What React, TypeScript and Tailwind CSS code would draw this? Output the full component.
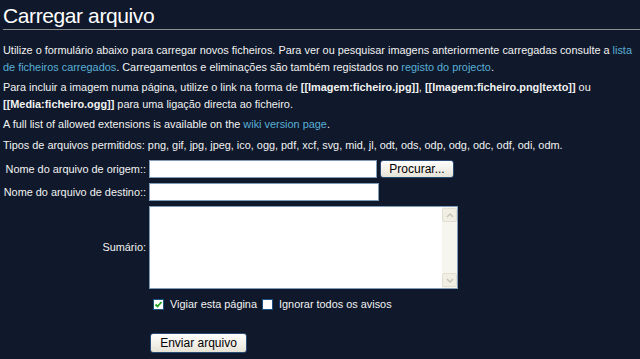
import React from "react";

const font = { fontFamily: '"Liberation Sans", Arial, sans-serif' };

function Link({ children }: { children: React.ReactNode }) {
  return <span className="text-[#5aaed6]">{children}</span>;
}

function CheckBox({ checked }: { checked?: boolean }) {
  return (
    <span className="inline-flex h-[11px] w-[11px] items-center justify-center border border-[#1c5180] bg-white">
      {checked && (
        <svg viewBox="0 0 9 9" className="h-[9px] w-[9px]">
          <path d="M1.5 4.5 L3.5 6.5 L7.5 2" stroke="#21a121" strokeWidth="1.8" fill="none" />
        </svg>
      )}
    </span>
  );
}

function XpButton({ children, className }: { children: React.ReactNode; className?: string }) {
  return (
    <button
      className={`rounded-[3px] border border-[#2b4a74] bg-gradient-to-b from-white to-[#e6e3d6] text-[12px] text-black ${className ?? ""}`}
    >
      {children}
    </button>
  );
}

export default function App() {
  return (
    <div className="h-[359px] w-[640px] overflow-hidden bg-[#0f192b] text-[10.9px] text-[#f2f2f2]" style={font}>
      <h1 className="ml-[3px] border-b border-[#8d8d8d] pt-[3px] pb-[1px] text-[21px] leading-[25px] tracking-[-0.4px] text-white">
        Carregar arquivo
      </h1>

      <div className="px-[3px] pt-[12px] leading-[16.5px]">
        <p className="whitespace-nowrap">
          Utilize o formulário abaixo para carregar novos ficheiros. Para ver ou pesquisar imagens anteriormente carregadas consulte a <Link>lista</Link>
          <br />
          <Link>de ficheiros carregados</Link>. Carregamentos e eliminações são também registados no <Link>registo do projecto</Link>.
        </p>
        <p className="mt-[4px] whitespace-nowrap">
          Para incluir a imagem numa página, utilize o link na forma de <b>[[Imagem:ficheiro.jpg]]</b>, <b>[[Imagem:ficheiro.png|texto]]</b> ou
          <br />
          <b>[[Media:ficheiro.ogg]]</b> para uma ligação directa ao ficheiro.
        </p>
        <p className="mt-[4px] whitespace-nowrap">
          A full list of allowed extensions is available on the <Link>wiki version page</Link>.
        </p>
        <p className="mt-[4px] whitespace-nowrap">
          Tipos de arquivos permitidos: png, gif, jpg, jpeg, ico, ogg, pdf, xcf, svg, mid, jl, odt, ods, odp, odg, odc, odf, odi, odm.
        </p>
      </div>

      <div className="mt-[7px] grid grid-cols-[146px_1fr] gap-x-[3px] gap-y-[5px]">
        <label className="self-center whitespace-nowrap text-right">Nome do arquivo de origem::</label>
        <div className="flex items-center gap-[3px]">
          <div className="h-[18px] w-[228px] border border-[#7f9db9] bg-white" />
          <XpButton className="h-[18px] w-[74px] leading-[14px]">Procurar...</XpButton>
        </div>

        <label className="self-center whitespace-nowrap text-right">Nome do arquivo de destino::</label>
        <div className="h-[18px] w-[230px] border border-[#7f9db9] bg-white" />

        <label className="self-center text-right">Sumário:</label>
        <div className="flex h-[83px] w-[309px] border border-[#7f9db9] bg-white">
          <div className="flex-1" />
          <div className="flex w-[15px] flex-col justify-between bg-[#f6f5ee] py-px">
            <div className="flex h-[14px] items-center justify-center rounded-[2px] border border-[#e1dfd2] bg-[#f1efe4]">
              <svg viewBox="0 0 8 5" className="h-[5px] w-[8px]">
                <path d="M1 4 L4 1 L7 4" stroke="#c4c3b8" strokeWidth="1.4" fill="none" />
              </svg>
            </div>
            <div className="flex h-[14px] items-center justify-center rounded-[2px] border border-[#e1dfd2] bg-[#f1efe4]">
              <svg viewBox="0 0 8 5" className="h-[5px] w-[8px]">
                <path d="M1 1 L4 4 L7 1" stroke="#c4c3b8" strokeWidth="1.4" fill="none" />
              </svg>
            </div>
          </div>
        </div>

        <div />
        <div className="mt-[2px] flex items-center pl-[4px]">
          <CheckBox checked />
          <span className="ml-[6px]">Vigiar esta página</span>
          <span className="ml-[5px] inline-flex"><CheckBox /></span>
          <span className="ml-[6px]">Ignorar todos os avisos</span>
        </div>

        <div />
        <div className="mt-[16px] pl-px">
          <XpButton className="h-[20px] w-[97px]">Enviar arquivo</XpButton>
        </div>
      </div>
    </div>
  );
}
